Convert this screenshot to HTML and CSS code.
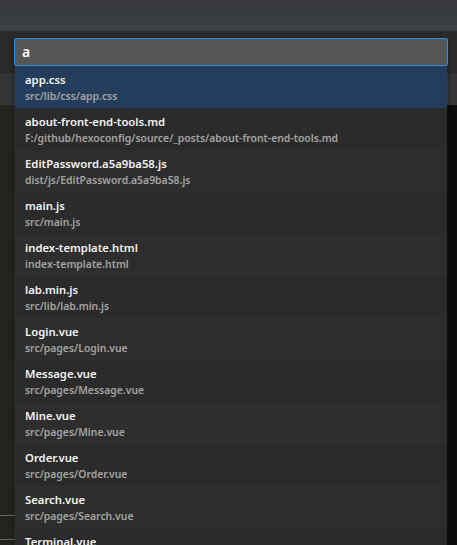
FILE: index.html
```html
<!DOCTYPE html>
<html>
<head>
<meta charset="utf-8">
<link rel="stylesheet" href="styles.css">
</head>
<body>
<div class="app">
  <div class="titlebar"></div>
  <div class="toolbar"></div>
  <div class="tabs"></div>
  <div class="workspace">
    <div class="sidebar">
      <div class="sb-space"></div>
      <div class="sb-line"></div>
      <div class="sb-gap"></div>
      <div class="sb-line"></div>
    </div>
    <div class="editor"></div>
  </div>

  <div class="quickopen">
    <div class="qo-input">a</div>
    <div class="qo-list">
      <div class="qo-item selected"><div class="qo-name">app.css</div><div class="qo-path">src/lib/css/app.css</div></div>
      <div class="qo-item"><div class="qo-name">about-front-end-tools.md</div><div class="qo-path">F:/github/hexoconfig/source/_posts/about-front-end-tools.md</div></div>
      <div class="qo-item"><div class="qo-name">EditPassword.a5a9ba58.js</div><div class="qo-path">dist/js/EditPassword.a5a9ba58.js</div></div>
      <div class="qo-item"><div class="qo-name">main.js</div><div class="qo-path">src/main.js</div></div>
      <div class="qo-item"><div class="qo-name">index-template.html</div><div class="qo-path">index-template.html</div></div>
      <div class="qo-item"><div class="qo-name">lab.min.js</div><div class="qo-path">src/lib/lab.min.js</div></div>
      <div class="qo-item"><div class="qo-name">Login.vue</div><div class="qo-path">src/pages/Login.vue</div></div>
      <div class="qo-item"><div class="qo-name">Message.vue</div><div class="qo-path">src/pages/Message.vue</div></div>
      <div class="qo-item"><div class="qo-name">Mine.vue</div><div class="qo-path">src/pages/Mine.vue</div></div>
      <div class="qo-item"><div class="qo-name">Order.vue</div><div class="qo-path">src/pages/Order.vue</div></div>
      <div class="qo-item"><div class="qo-name">Search.vue</div><div class="qo-path">src/pages/Search.vue</div></div>
      <div class="qo-item"><div class="qo-name">Terminal.vue</div><div class="qo-path">src/pages/Terminal.vue</div></div>
    </div>
  </div>
</div>
</body>
</html>
```
FILE: styles.css
```css
html, body {
  margin: 0;
  padding: 0;
  height: 100%;
  overflow: hidden;
  background: #24241f;
  font-family: "Noto Sans", "Open Sans", sans-serif;
}
.app {
  position: relative;
  height: 545px;
  display: flex;
  flex-direction: column;
}
.titlebar {
  height: 31px;
  background: linear-gradient(#37393c, #3d4043);
}
.toolbar {
  height: 42px;
  background: #2a2a2a;
}
.tabs {
  height: 32px;
  background: #333537;
}
.workspace {
  flex: 1;
  display: flex;
}
.sidebar {
  width: 200px;
  background: #24241f;
  display: flex;
  flex-direction: column;
}
.sb-space { height: 410px; }
.sb-line { height: 1px; background: #6b6b66; }
.sb-gap { height: 23px; }
.editor {
  flex: 1;
  background: #0c0c0c;
}
.quickopen {
  position: absolute;
  top: 38px;
  left: 14px;
  width: 434px;
  box-shadow: 0 0 4px rgba(0,0,0,0.5);
}
.qo-input {
  height: 26px;
  border: 1px solid #2f8be0;
  border-radius: 2px;
  background: #555555;
  color: #ffffff;
  font-size: 14px;
  font-weight: 600;
  line-height: 26px;
  padding-left: 7px;
}
.qo-list {
  margin: 0 1px;
  background: #2b2b2b;
}
.qo-item {
  height: 42px;
  box-sizing: border-box;
  padding: 4px 0 0 10px;
  background: #2b2b2b;
}
.qo-item:nth-child(odd) { background: #2e2e2e; }
.qo-item.selected { background: #253d5d; }
.qo-name {
  color: #f4f4f4;
  font-size: 11.3px;
  font-weight: 600;
  line-height: 19px;
}
.qo-path {
  color: #a4a4a4;
  font-size: 10.4px;
  font-weight: 600;
  line-height: 14px;
}
```
